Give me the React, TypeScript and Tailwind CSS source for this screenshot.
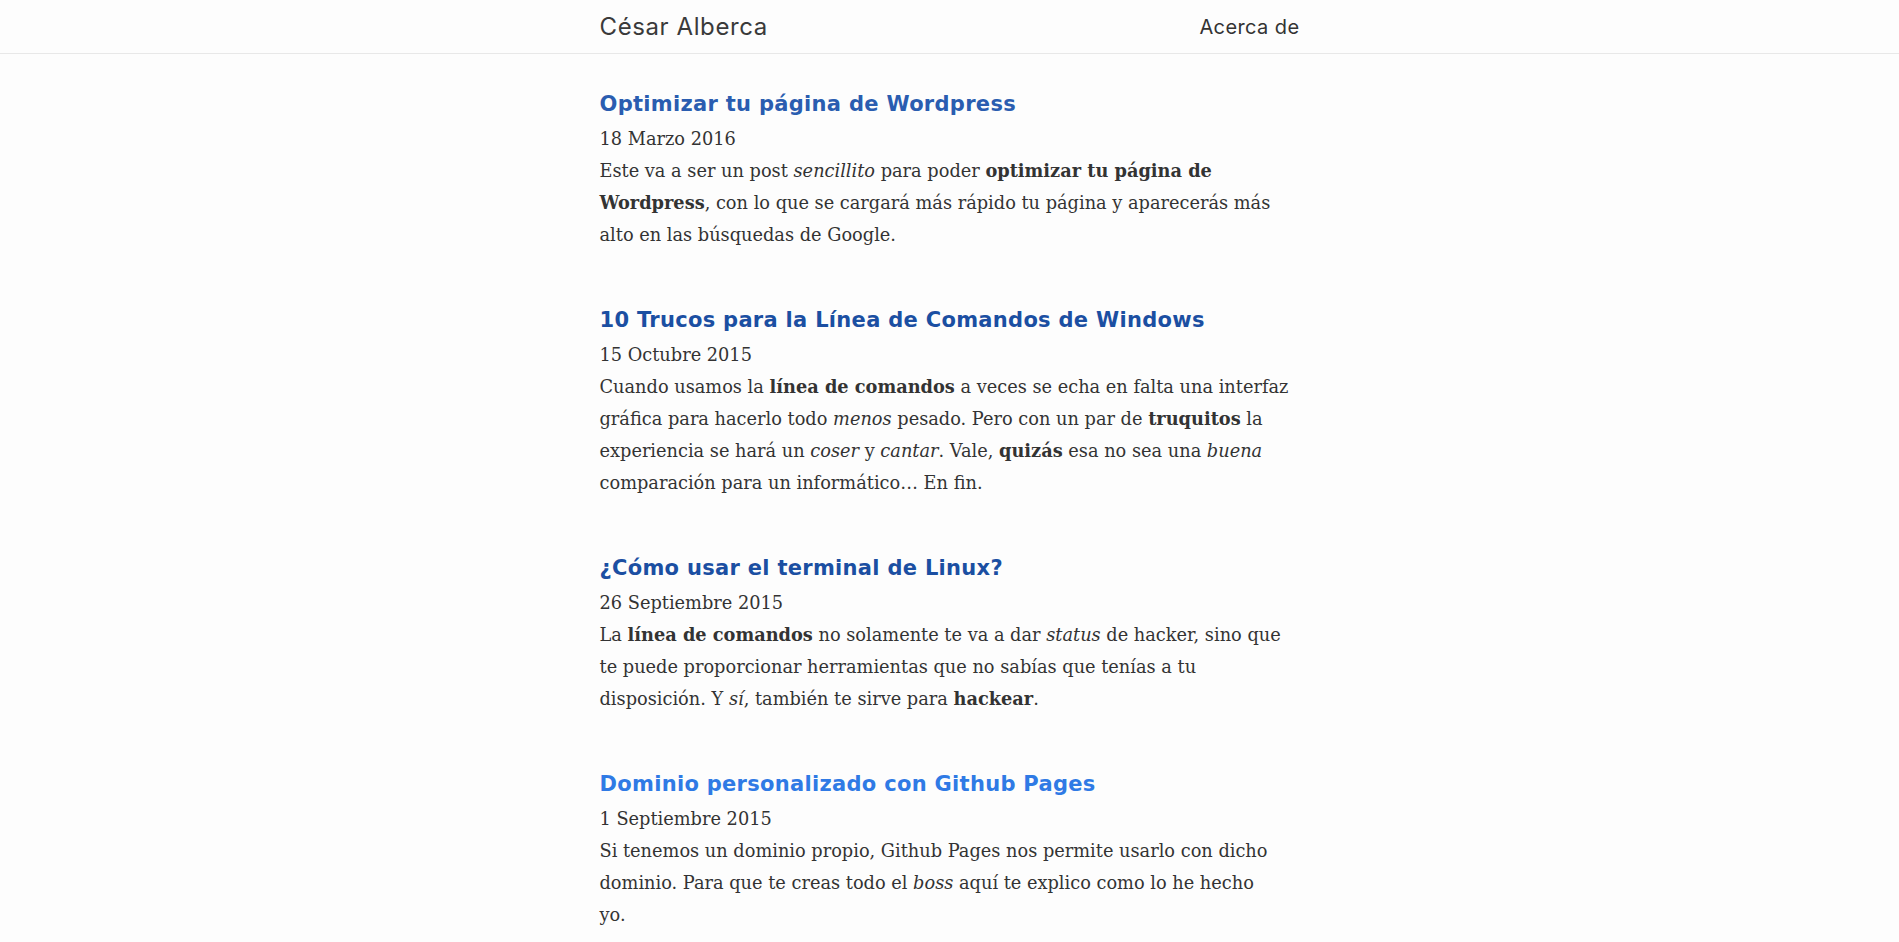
type Part = { t: string; b?: boolean; i?: boolean; br?: boolean };

type Post = {
  title: string;
  date: string;
  color: string;
  excerpt: Part[];
};

const posts: Post[] = [
  {
    title: "Optimizar tu página de Wordpress",
    date: "18 Marzo 2016",
    color: "text-[#2a5db0]",
    excerpt: [
      { t: "Este va a ser un post " },
      { t: "sencillito", i: true },
      { t: " para poder " },
      { t: "optimizar tu página de Wordpress", b: true },
      { t: ", con lo que se cargará más rápido tu página y aparecerás más alto en las búsquedas de Google." },
    ],
  },
  {
    title: "10 Trucos para la Línea de Comandos de Windows",
    date: "15 Octubre 2015",
    color: "text-[#1b4fa2]",
    excerpt: [
      { t: "Cuando usamos la " },
      { t: "línea de comandos", b: true },
      { t: " a veces se echa en falta una interfaz gráfica para hacerlo todo " },
      { t: "menos", i: true },
      { t: " pesado. Pero con un par de " },
      { t: "truquitos", b: true },
      { t: " la experiencia se hará un " },
      { t: "coser", i: true },
      { t: " y " },
      { t: "cantar", i: true },
      { t: ". Vale, " },
      { t: "quizás", b: true },
      { t: " esa no sea una " },
      { t: "buena", i: true },
      { t: " comparación para un informático… En fin." },
    ],
  },
  {
    title: "¿Cómo usar el terminal de Linux?",
    date: "26 Septiembre 2015",
    color: "text-[#1b4fa2]",
    excerpt: [
      { t: "La " },
      { t: "línea de comandos", b: true },
      { t: " no solamente te va a dar " },
      { t: "status", i: true },
      { t: " de hacker, sino que te puede proporcionar herramientas que no sabías que tenías a tu disposición. Y " },
      { t: "sí", i: true },
      { t: ", también te sirve para " },
      { t: "hackear", b: true },
      { t: "." },
    ],
  },
  {
    title: "Dominio personalizado con Github Pages",
    date: "1 Septiembre 2015",
    color: "text-[#2f7ae5]",
    excerpt: [
      { t: "Si tenemos un dominio propio, Github Pages nos permite usarlo con dicho dominio. Para que te creas todo el " },
      { t: "boss", i: true },
      { t: " aquí te explico como lo he hecho" },
      { t: "", br: true },
      { t: "yo." },
    ],
  },
];

export default function App() {
  return (
    <div className="min-h-screen bg-[#fdfdfd] text-[#333]">
      {/* Header */}
      <header className="border-b border-[#e8e8e8]">
        <div className="mx-auto flex h-[53px] max-w-[700px] items-center justify-between font-['Inter',sans-serif]">
          <a className="text-[24px] tracking-[0.6px] text-[#3a3a3a]">César Alberca</a>
          <a className="text-[20px] tracking-[0.4px] text-[#333]">Acerca de</a>
        </div>
      </header>

      {/* Posts */}
      <main className="mx-auto max-w-[700px] pt-[35px]">
        <ul className="space-y-[54px]">
          {posts.map((post) => (
            <li key={post.title}>
              <h2
                className={`font-['DejaVu_Sans',sans-serif] text-[21px] leading-[30px] tracking-[0.3px] font-bold ${post.color}`}
              >
                {post.title}
              </h2>
              <p className="mt-[4px] font-['DejaVu_Serif',serif] text-[17.75px] leading-[32px]">
                {post.date}
              </p>
              <p className="font-['DejaVu_Serif',serif] text-[17.75px] leading-[32px]">
                {post.excerpt.map((part, i) =>
                  part.br ? (
                    <br key={i} />
                  ) : part.b ? (
                    <strong key={i} className="font-bold">
                      {part.t}
                    </strong>
                  ) : part.i ? (
                    <em key={i}>{part.t}</em>
                  ) : (
                    <span key={i}>{part.t}</span>
                  )
                )}
              </p>
            </li>
          ))}
        </ul>
      </main>
    </div>
  );
}
